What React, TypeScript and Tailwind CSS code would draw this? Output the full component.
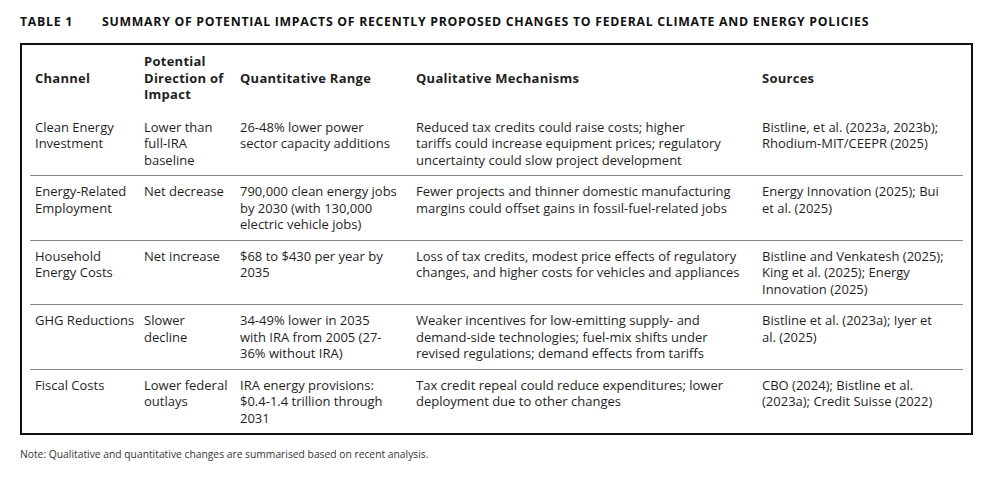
const rows = [
  {
    channel: ['Clean Energy', 'Investment'],
    direction: ['Lower than', 'full-IRA', 'baseline'],
    range: ['26-48% lower power', 'sector capacity additions'],
    mechanisms: [
      'Reduced tax credits could raise costs; higher',
      'tariffs could increase equipment prices; regulatory',
      'uncertainty could slow project development',
    ],
    sources: ['Bistline, et al. (2023a, 2023b);', 'Rhodium-MIT/CEEPR (2025)'],
  },
  {
    channel: ['Energy-Related', 'Employment'],
    direction: ['Net decrease'],
    range: ['790,000 clean energy jobs', 'by 2030 (with 130,000', 'electric vehicle jobs)'],
    mechanisms: [
      'Fewer projects and thinner domestic manufacturing',
      'margins could offset gains in fossil-fuel-related jobs',
    ],
    sources: ['Energy Innovation (2025); Bui', 'et al. (2025)'],
  },
  {
    channel: ['Household', 'Energy Costs'],
    direction: ['Net increase'],
    range: ['$68 to $430 per year by', '2035'],
    mechanisms: [
      'Loss of tax credits, modest price effects of regulatory',
      'changes, and higher costs for vehicles and appliances',
    ],
    sources: ['Bistline and Venkatesh (2025);', 'King et al. (2025); Energy', 'Innovation (2025)'],
  },
  {
    channel: ['GHG Reductions'],
    direction: ['Slower', 'decline'],
    range: ['34-49% lower in 2035', 'with IRA from 2005 (27-', '36% without IRA)'],
    mechanisms: [
      'Weaker incentives for low-emitting supply- and',
      'demand-side technologies; fuel-mix shifts under',
      'revised regulations; demand effects from tariffs',
    ],
    sources: ['Bistline et al. (2023a); Iyer et', 'al. (2025)'],
  },
  {
    channel: ['Fiscal Costs'],
    direction: ['Lower federal', 'outlays'],
    range: ['IRA energy provisions:', '$0.4-1.4 trillion through', '2031'],
    mechanisms: [
      'Tax credit repeal could reduce expenditures; lower',
      'deployment due to other changes',
    ],
    sources: ['CBO (2024); Bistline et al.', '(2023a); Credit Suisse (2022)'],
  },
];

const Lines = ({ lines }: { lines: string[] }) => (
  <div>
    {lines.map((l) => (
      <div key={l} className="whitespace-nowrap">
        {l}
      </div>
    ))}
  </div>
);

const gridCols = 'grid grid-cols-[109px_96px_176px_346px_1fr] pl-[5px]';

export default function App() {
  return (
    <div className="w-[1000px] h-[477px] bg-white text-[#1f1f1f] font-['Open_Sans',sans-serif]">
      {/* Title */}
      <div className="flex pt-[14px] pl-[20px] text-[12.3px] leading-[16px] font-bold tracking-[0.058em] text-[#111]">
        <span className="w-[82px]">TABLE 1</span>
        <span>SUMMARY OF POTENTIAL IMPACTS OF RECENTLY PROPOSED CHANGES TO FEDERAL CLIMATE AND ENERGY POLICIES</span>
      </div>

      {/* Table */}
      <div className="mt-[13px] ml-[20px] w-[953px] border-2 border-[#111] px-[8px] text-[13px] leading-[16.5px]">
        <div className={`${gridCols} pt-[8px] pb-[9px] font-bold tracking-[0.02em] items-center`}>
          <div>Channel</div>
          <Lines lines={['Potential', 'Direction of', 'Impact']} />
          <div>Quantitative Range</div>
          <div>Qualitative Mechanisms</div>
          <div>Sources</div>
        </div>
        {rows.map((r, i) => (
          <div
            key={r.channel[0]}
            className={`${gridCols} py-[7px] min-h-[63.5px] ${i < rows.length - 1 ? 'border-b border-[#8a8a8a]' : ''}`}
          >
            <Lines lines={r.channel} />
            <Lines lines={r.direction} />
            <Lines lines={r.range} />
            <Lines lines={r.mechanisms} />
            <Lines lines={r.sources} />
          </div>
        ))}
      </div>

      {/* Note */}
      <div className="mt-[12px] pl-[20px] text-[10.3px] leading-[14px] text-[#333]">
        Note: Qualitative and quantitative changes are summarised based on recent analysis.
      </div>
    </div>
  );
}
